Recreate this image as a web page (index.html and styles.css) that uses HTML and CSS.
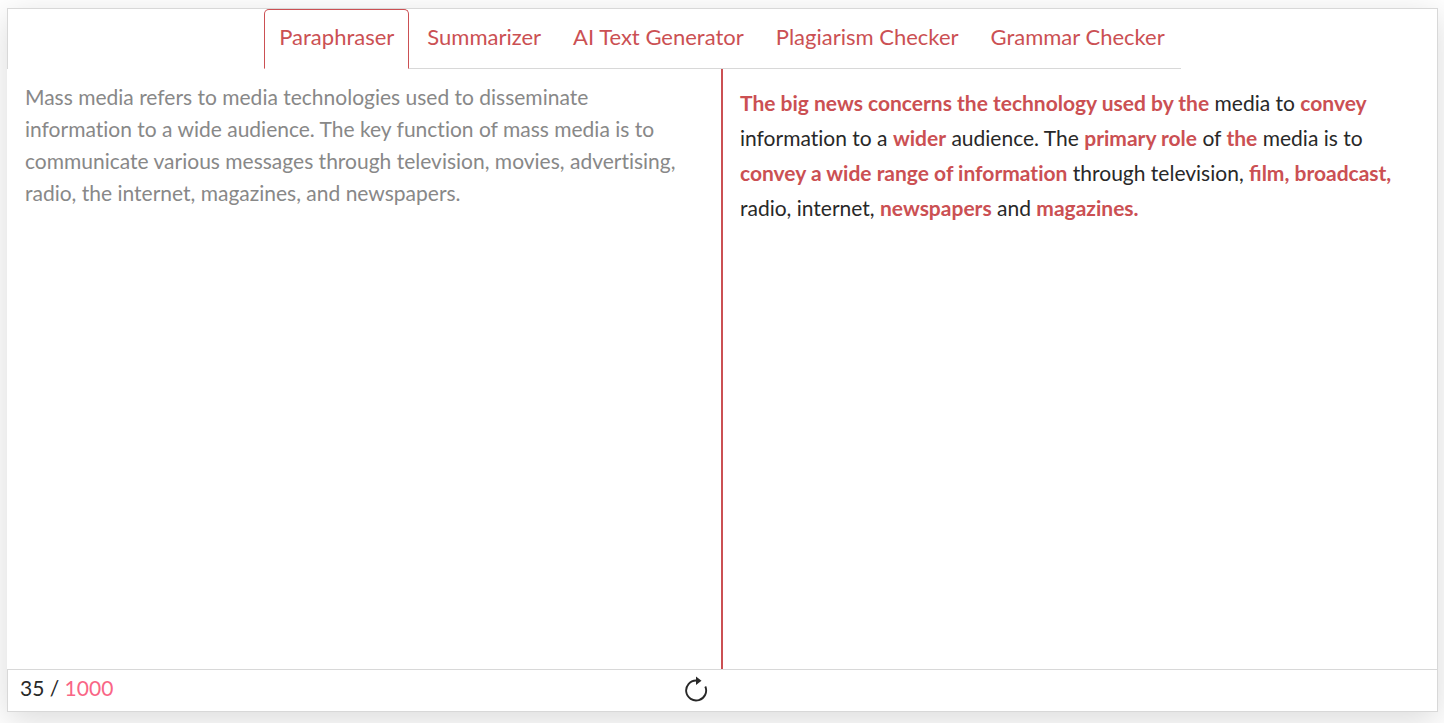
FILE: index.html
```html
<!DOCTYPE html>
<html lang="en">
<head>
<meta charset="utf-8">
<title>Paraphraser</title>
<link rel="stylesheet" href="styles.css">
</head>
<body>
<main class="card">
  <header class="head">
  <nav class="tabs">
    <a class="tab active" href="#paraphraser">Paraphraser</a>
    <a class="tab" href="#summarizer">Summarizer</a>
    <a class="tab" href="#generator">AI Text Generator</a>
    <a class="tab" href="#plagiarism">Plagiarism Checker</a>
    <a class="tab" href="#grammar">Grammar Checker</a>
  </nav>
  </header>
  <div class="panes">
    <textarea class="source" aria-label="Text to paraphrase">Mass media refers to media technologies used to disseminate information to a wide audience. The key function of mass media is to communicate various messages through television, movies, advertising, radio, the internet, magazines, and newspapers.</textarea>
    <section class="result" aria-label="Result"><b>The big news concerns the technology used by the</b> media to <b>convey</b> information to a <b>wider</b> audience. The <b>primary role</b> of <b>the</b> media is to <b>convey a wide range of information</b> through television, <b class="joined">film, broadcast,</b> radio, internet, <b>newspapers</b> and <b>magazines.</b></section>
  </div>
  <footer class="bar">
    <div class="half">
      <span>35 / <span class="limit">1000</span></span>
      <button class="reset" type="button" aria-label="Start over">
        <svg width="24" height="28" viewBox="0 0 24 28"><path d="M12 4.500A10 10 0 1 0 21.300 10.500" fill="none" stroke="#282828" stroke-width="1.900"/><path d="M12 .500l5.500 4.200-5.500 4.200z" fill="#282828"/></svg>
      </button>
    </div>
  </footer>
</main>
</body>
</html>
```
FILE: styles.css
```css
* { box-sizing: border-box; }
body {
  margin: 0;
  padding: 8px 6px 11px 7px;
  min-height: 100vh;
  display: flex;
  background: #fff;
  color: #282828;
  font: 21px/32px Lato, sans-serif;
  font-variant-ligatures: none;
}
.card {
  flex: 1;
  display: flex;
  flex-direction: column;
  border-right: 1px solid #d8d8d8;
  background: #fff;
  box-shadow: 0 8px 32px rgba(0, 0, 0, .15);
}
.head {
  display: flex;
  justify-content: center;
  border-top: 1px solid #d8d8d8;
  border-left: 1px solid #d8d8d8;
}
.tabs {
  display: flex;
  height: 60px;
  border-bottom: 1px solid #d8d8d8;
  font-size: 22px;
}
.tab {
  padding: 11px 15px;
  margin-bottom: -1px;
  border: 1px solid transparent;
  color: #cb5053;
  text-decoration: none;
}
.active {
  padding: 11px 14px;
  border-color: #cb5053;
  border-bottom-color: #fff;
  border-radius: 5px 5px 0 0;
  background: #fff;
}
.active + .tab { padding-left: 17px; }
.panes {
  flex: 1;
  display: grid;
  grid-template-columns: 1fr 1fr;
  padding-left: 2px;
}
.source {
  display: block;
  width: 100%;
  height: 100%;
  padding: 12px 30px 12px 16px;
  border: 0;
  border-right: 2px solid #cb5053;
  outline: 0;
  resize: none;
  color: #888;
  background: #fff;
  font: inherit;
  font-variant-ligatures: none;
}
.result { padding: 16px 17px; line-height: 35px; }
.result b { color: #cb5053; }
.joined { font-variant-ligatures: normal; }
.bar {
  height: 43px;
  border: 1px solid #d8d8d8;
  border-right: 0;
}
.half {
  width: 50%;
  display: flex;
  justify-content: space-between;
  padding: 2px 15px 2px 12px;
}
.limit { color: #f96686; }
.reset { padding: 4px 0 0; border: 0; background: none; height: 32px; color: inherit; }
.reset svg { display: block; }
```
